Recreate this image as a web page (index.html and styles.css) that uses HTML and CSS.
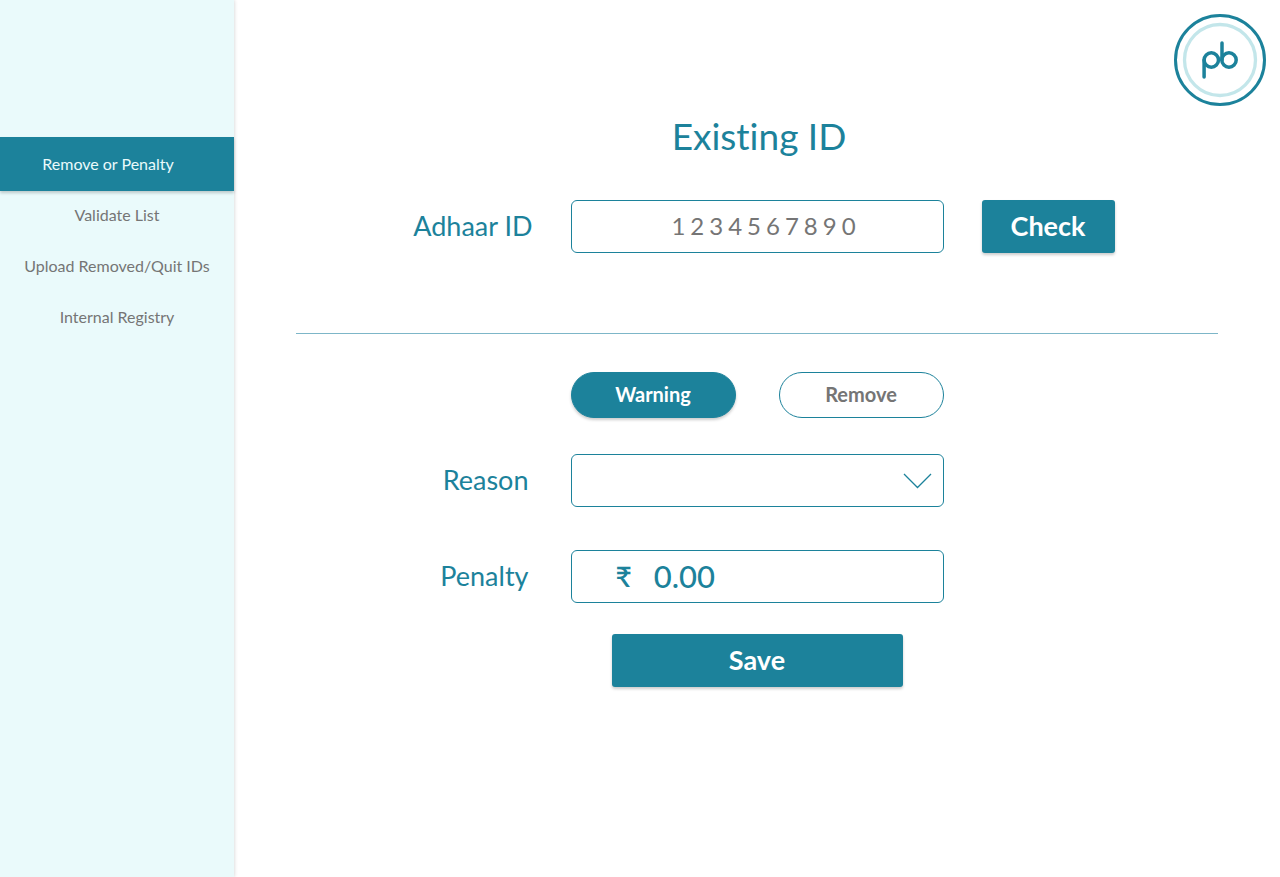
FILE: index.html
```
<!DOCTYPE html>
<html lang="en">
<head>
<meta charset="utf-8">
<meta name="viewport" content="width=device-width, initial-scale=1">
<title>Existing ID</title>
<link rel="stylesheet" href="styles.css">
</head>
<body>
<div class="layout">
  <nav class="sidebar" aria-label="Main">
    <a class="nav-item nav-item-active" href="#" aria-current="page">Remove or Penalty</a>
    <a class="nav-item" href="#">Validate List</a>
    <a class="nav-item" href="#">Upload Removed/Quit IDs</a>
    <a class="nav-item" href="#">Internal Registry</a>
  </nav>
  <main class="content">
    <header class="topbar">
      <svg class="logo" viewBox="0 0 92 92" role="img" aria-label="pb">
        <circle cx="46" cy="46" r="44.500" fill="#fff" stroke="#1c829b" stroke-width="3"/>
        <circle cx="46" cy="46" r="35.500" fill="none" stroke="#c3e6ea" stroke-width="3.300"/>
        <g fill="none" stroke="#1c829b" stroke-width="3.500" stroke-linecap="round">
          <circle cx="37.300" cy="46" r="7.200"/>
          <circle cx="55" cy="46" r="7.200"/>
          <path d="M30.100 46V63M48 46V29"/>
        </g>
      </svg>
    </header>
    <h1 class="title">Existing ID</h1>
    <form class="form-row lookup">
      <label class="label" for="adhaar">Adhaar ID</label>
      <input class="field adhaar" id="adhaar" type="text" inputmode="numeric" value="1234567890">
      <button class="button check" type="button">Check</button>
    </form>
    <hr class="divider">
    <form class="penalty-form">
      <div class="choices">
        <button class="pill pill-active" type="button" aria-pressed="true">Warning</button>
        <button class="pill" type="button" aria-pressed="false">Remove</button>
      </div>
      <div class="form-row">
        <label class="label label-inset" for="reason">Reason</label>
        <div class="select-wrap">
          <select class="field select" id="reason"><option value=""></option></select>
          <svg class="chevron" viewBox="0 0 28 16" aria-hidden="true"><path d="M.5 1 14 14.500 27.500 1" fill="none" stroke="#1c829b" stroke-width="1.300"/></svg>
        </div>
      </div>
      <div class="form-row amount-row">
        <label class="label label-inset" for="penalty">Penalty</label>
        <div class="field amount">
          <span class="currency">₹</span>
          <input class="amount-input" id="penalty" type="text" inputmode="decimal" value="0.00">
        </div>
      </div>
      <button class="button save" type="button">Save</button>
    </form>
  </main>
</div>
</body>
</html>
```
FILE: styles.css
```
* { box-sizing: border-box; }

body {
  margin: 0;
  background: #fff;
  color: #1c829b;
  font-family: Lato, "Noto Sans", sans-serif;
  font-variant-ligatures: none;
}

button, input, select { font-family: inherit; }

.layout {
  display: grid;
  grid-template-columns: 234px 1fr;
  min-height: 100vh;
}

.sidebar {
  padding-top: 137px;
  background: #eafafb;
  box-shadow: 0 0 4px rgba(0, 0, 0, 0.2);
}

.nav-item {
  display: block;
  height: 51px;
  color: #757575;
  font-size: 16px;
  line-height: 49px;
  text-align: center;
  text-decoration: none;
  white-space: nowrap;
}

.nav-item-active {
  height: 54px;
  margin-bottom: -1px;
  padding-right: 18px;
  background: #1c829b;
  box-shadow: 0 2px 3px rgba(0, 0, 0, 0.2);
  color: #eafafb;
  line-height: 54px;
}

.topbar {
  display: flex;
  justify-content: flex-end;
  padding: 14px 14px 0;
}

.logo { width: 92px; height: 92px; }

.title {
  margin: 8px 0 0 4px;
  font-size: 37px;
  font-weight: 400;
  line-height: 44px;
  text-align: center;
}

.form-row {
  display: grid;
  grid-template-columns: 1fr 373px 1fr;
  column-gap: 38px;
  align-items: center;
}

.lookup { margin-top: 42px; }

.label {
  padding-bottom: 2px;
  font-size: 27px;
  line-height: 50px;
  text-align: right;
}

.label-inset { padding-right: 4px; }

.field {
  width: 100%;
  height: 53px;
  border: 1px solid #1c829b;
  border-radius: 6px;
  background: #fff;
}

.adhaar {
  padding: 0 0 2px 18px;
  color: #757575;
  font-size: 24px;
  letter-spacing: 5px;
  text-align: center;
}

.button {
  height: 53px;
  padding: 0 0 2px;
  border: 0;
  border-radius: 3px;
  background: #1c829b;
  box-shadow: 0 2px 3px rgba(0, 0, 0, 0.2);
  color: #fff;
  font-size: 27px;
  font-weight: 700;
}

.check { width: 133px; }

.divider {
  height: 1px;
  margin: 80px 62px 0;
  border: 0;
  background: #7db6c8;
}

.penalty-form {
  display: flex;
  flex-direction: column;
  margin-top: 38px;
}

.choices {
  display: flex;
  justify-content: space-between;
  align-self: center;
  width: 373px;
  margin-bottom: 36px;
}

.pill {
  width: 165px;
  height: 46px;
  padding: 0 0 2px;
  border: 1px solid #1c829b;
  border-radius: 23px;
  background: #fff;
  color: #757575;
  font-size: 20px;
  font-weight: 700;
}

.pill-active {
  background: #1c829b;
  box-shadow: 0 2px 3px rgba(0, 0, 0, 0.2);
  color: #fff;
}

.select-wrap { position: relative; }

.select {
  display: block;
  padding: 0 48px 0 16px;
  color: #1c829b;
  font-size: 24px;
  appearance: none;
}

.chevron {
  position: absolute;
  top: 19px;
  right: 12px;
  width: 29px;
  height: 16px;
  pointer-events: none;
}

.amount-row { margin-top: 43px; }

.amount {
  display: flex;
  align-items: center;
  gap: 22px;
  padding: 0 0 2px 44px;
}

.currency {
  font-size: 28px;
  font-weight: 600;
}

.amount-input {
  flex: 1;
  min-width: 0;
  padding: 0;
  border: 0;
  background: transparent;
  color: #1c829b;
  font-size: 31px;
  font-weight: 500;
}

.save {
  align-self: center;
  width: 291px;
  margin-top: 31px;
}
```
